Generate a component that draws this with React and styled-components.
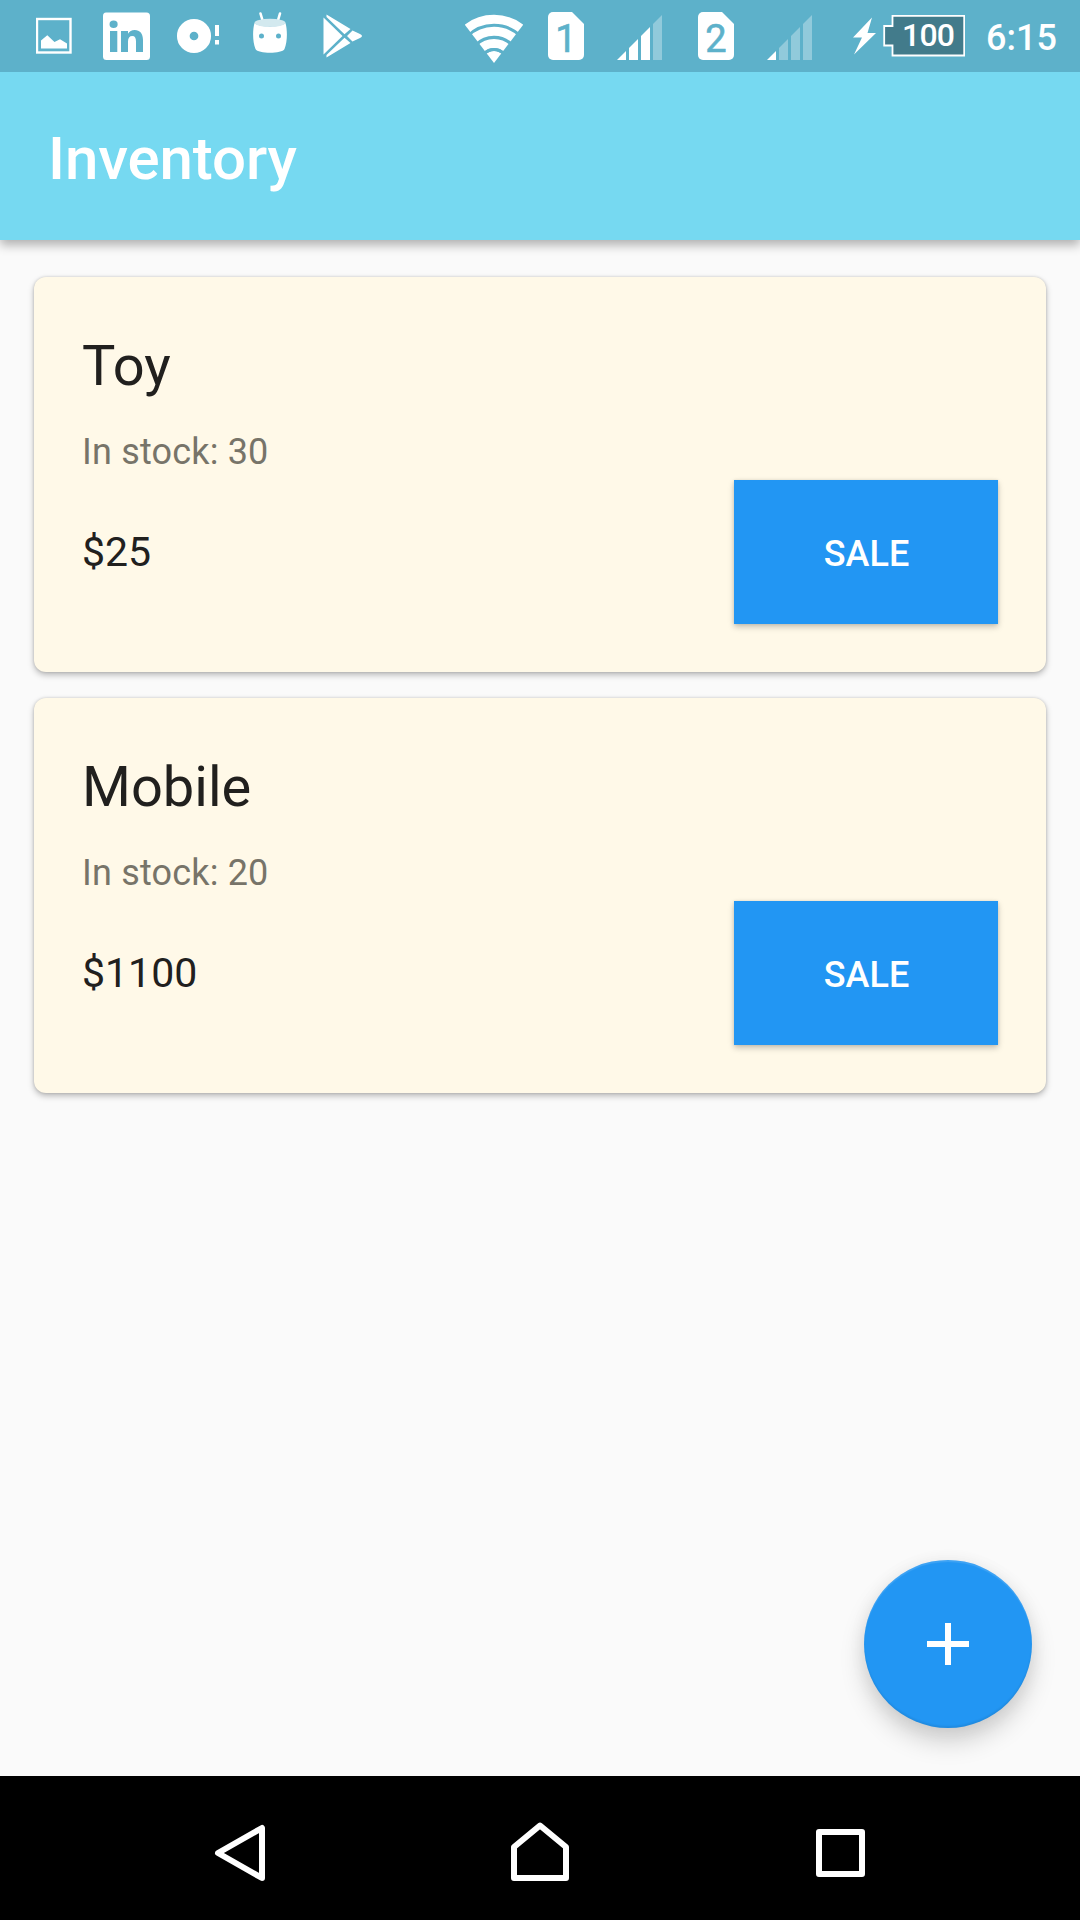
import React from "react";
import styled, { createGlobalStyle } from "styled-components";

const GlobalStyle = createGlobalStyle`
  * { box-sizing: border-box; }
  body { margin: 0; background: #fafafa; font-family: Roboto, "Liberation Sans", sans-serif; }
`;

const Screen = styled.div`
  width: 1080px;
  height: 1920px;
  display: flex;
  flex-direction: column;
  overflow: hidden;
  background: #fafafa;
`;

const StatusBar = styled.header`
  height: 72px;
  flex: none;
  display: flex;
  align-items: center;
  background: #5db1ca;
  color: #fff;
  z-index: 2;
`;

const StatusIcon = styled.svg`
  display: block;
  flex: none;
  width: ${(p) => p.$w}px;
  height: 72px;
  margin-left: ${(p) => p.$gap || 0}px;
  fill: #fff;
`;

const SimBadge = styled.span`
  flex: none;
  width: 36px;
  height: 48px;
  margin-left: ${(p) => p.$gap}px;
  border-radius: 5px;
  clip-path: polygon(0 0, 24px 0, 100% 12px, 100% 100%, 0 100%);
  background: #fff;
  color: #5db1ca;
  font-size: 38px;
  font-weight: 400;
  -webkit-text-stroke: 0.6px #5db1ca;
  line-height: 54px;
  text-align: center;
`;

const Battery = styled.span`
  display: grid;
  flex: none;
  margin-left: 6px;
  > * { grid-area: 1 / 1; }
`;

const BatteryLevel = styled.span`
  padding-left: 19px;
  font-size: 32px;
  font-weight: 500;
  letter-spacing: -0.8px;
  line-height: 71px;
`;

const Clock = styled.span`
  margin-left: 21px;
  font-size: 36px;
  font-weight: 500;
  line-height: 72px;
  padding-top: 4px;
`;

const AppBar = styled.div`
  height: 168px;
  flex: none;
  display: flex;
  align-items: center;
  padding: 4px 48px 0;
  background: #76d9f1;
  box-shadow: 0 5px 10px rgba(0, 0, 0, 0.3);
  z-index: 1;
`;

const AppTitle = styled.h1`
  margin: 0;
  color: #fff;
  font-size: 60px;
  font-weight: 500;
  letter-spacing: -0.1px;
`;

const Content = styled.main`
  flex: 1;
  display: flex;
  flex-direction: column;
  gap: 26px;
  padding: 37px 34px 48px;
`;

const Card = styled.article`
  height: 395px;
  display: flex;
  flex-direction: column;
  padding: 48px;
  border-radius: 12px;
  background: #fff9e8;
  box-shadow: 0 3px 6px rgba(0, 0, 0, 0.26), 0 0 3px rgba(0, 0, 0, 0.16);
`;

const ProductName = styled.h2`
  margin: 0;
  height: 81px;
  color: #21201e;
  font-size: 56px;
  font-weight: 400;
  line-height: 83px;
`;

const Stock = styled.p`
  margin: 0 0 auto;
  padding-top: 25px;
  color: #777469;
  font-size: 36px;
  letter-spacing: 0.18px;
  line-height: 42px;
`;

const SaleRow = styled.div`
  display: flex;
  justify-content: space-between;
  align-items: center;
`;

const Price = styled.span`
  padding-bottom: 1px;
  color: #21201e;
  font-size: 41px;
`;

const SaleButton = styled.button`
  width: 264px;
  height: 144px;
  padding: 4px 0 0 1px;
  border: 0;
  background: #2296f3;
  color: #fff;
  font: 500 36px Roboto, sans-serif;
  box-shadow: 0 3px 6px rgba(0, 0, 0, 0.22), 0 0 3px rgba(0, 0, 0, 0.1);
`;

const AddButton = styled.button`
  width: 168px;
  height: 168px;
  display: grid;
  place-items: center;
  margin: auto 14px 0 auto;
  padding: 0;
  border: 0;
  border-radius: 50%;
  background: #2296f3;
  box-shadow: 0 14px 24px rgba(0, 0, 0, 0.17), 0 2px 18px rgba(0, 0, 0, 0.06),
    inset 0 2px 1px rgba(255, 255, 255, 0.13), inset 0 -2px 2px rgba(0, 0, 0, 0.08);
`;

const NavBar = styled.nav`
  height: 144px;
  flex: none;
  display: flex;
  justify-content: space-between;
  align-items: center;
  padding: 4px 200px 0;
  background: #000;
  z-index: 1;
`;

const NavIcon = styled.svg`
  display: block;
  width: 80px;
  height: 80px;
  fill: none;
  stroke: #fff;
  stroke-width: 6;
  stroke-linejoin: round;
`;

const products = [
  { name: "Toy", stock: 30, price: 25 },
  { name: "Mobile", stock: 20, price: 1100 },
];

function Signal({ level, gap }) {
  const bars = [
    "M0 60 9 51V60Z",
    "M12 48 21 39V60H12Z",
    "M24 36 33 27V60H24Z",
    "M36 24 45 15V60H36Z",
  ];
  return (
    <StatusIcon $w={45} $gap={gap} viewBox="0 0 45 72">
      {bars.map((d, i) => (
        <path key={d} d={d} opacity={i < level ? 1 : 0.32} />
      ))}
    </StatusIcon>
  );
}

function Status() {
  return (
    <StatusBar>
      <StatusIcon $w={36} $gap={36} viewBox="36 0 36 72">
        <rect x="37" y="19" width="33.500" height="33.500" fill="none" stroke="#fff" strokeWidth="2.400" />
        <path d="M41 40.500 47.300 35.300 54.500 42 60 39.300 67 43.500V48.600H41Z" />
      </StatusIcon>
      <StatusIcon $w={48} $gap={30} viewBox="102 0 48 72">
        <path
          fillRule="evenodd"
          d="M106 12.500H146.500Q150 12.500 150 16V56.500Q150 60 146.500 60H106.500Q103 60 103 56.500V16Q103 12.500 106 12.500ZM110 31V52H117.300V31ZM113.600 20.500A4 3.700 0 1 0 113.600 28A4 3.700 0 1 0 113.600 20.500ZM121 31V52H128V41.500C128 38 129.500 36 132.300 36C135 36 136 38 136 41.500V52H143V40C143 33.500 139.800 30 134.800 30C131.500 30 129.300 31.500 128 33.700V31Z"
        />
      </StatusIcon>
      <StatusIcon $w={44} $gap={26} viewBox="176 0 44 72">
        <circle cx="194" cy="36" r="10.700" fill="none" stroke="#fff" strokeWidth="12.700" />
        <path d="M215 25H219V36H215ZM215 40H219V44.500H215Z" />
      </StatusIcon>
      <StatusIcon $w={36} $gap={32} viewBox="252 0 36 72">
        <path d="M260.500 13.500 263 22M280 13.500 277.500 22" stroke="#fff" strokeWidth="2.600" strokeLinecap="round" />
        <path
          fillRule="evenodd"
          d="M254.500 23C259 27.500 281 27.500 285.500 23C287.500 30 287.500 42 284.500 49C282 54 258 54 255.500 49C252.500 42 252.500 30 254.500 23ZM261.500 33.500A2.500 2.500 0 1 0 261.500 38.500A2.500 2.500 0 1 0 261.500 33.500ZM278.500 33.500A2.500 2.500 0 1 0 278.500 38.500A2.500 2.500 0 1 0 278.500 33.500Z"
        />
        <ellipse cx="270" cy="22.800" rx="15.500" ry="4" fill="#d3e9ef" />
      </StatusIcon>
      <StatusIcon $w={40} $gap={35} viewBox="323 0 40 72">
        <path d="M323.500 17.500 342.500 36 323.500 54.500ZM326.500 14.500 350.500 29 344.500 34.300 326.500 17ZM352.500 30.500 360 34Q364 36 360 38L352.500 41.500 347 36ZM344.500 37.700 350.500 43 326.500 57.500V55Z" />
      </StatusIcon>
      <StatusIcon $w={58} $gap={102} viewBox="465 0 58 72">
        <defs>
          <clipPath id="wifi">
            <path d="M494 63 462 21V8H526V21Z" />
          </clipPath>
        </defs>
        <g clipPath="url(#wifi)">
          <circle cx="494" cy="63" r="12" />
          <g fill="none" stroke="#fff">
            <circle cx="494" cy="63" r="19.500" strokeWidth="9" />
            <circle cx="494" cy="63" r="31.700" strokeWidth="9" />
            <circle cx="494" cy="63" r="43.700" strokeWidth="9" />
          </g>
          <circle cx="494" cy="63" r="13.500" fill="none" stroke="#5db1ca" strokeWidth="3" />
        </g>
      </StatusIcon>
      <SimBadge $gap={25}>1</SimBadge>
      <Signal level={3} gap={33} />
      <SimBadge $gap={36}>2</SimBadge>
      <Signal level={1} gap={33} />
      <StatusIcon $w={24} $gap={41} viewBox="853 0 24 72">
        <path d="M872 17.500 853 37.500H862L854 54.500 876 33H867.500Z" />
      </StatusIcon>
      <Battery>
        <StatusIcon $w={82} viewBox="883 0 82 72">
          <path
            d="M892.500 15.800H964.200V55.500H892.500V45.500H884.200V26H892.500Z"
            fill="#427b8b"
            stroke="#fff"
            strokeWidth="1.800"
          />
        </StatusIcon>
        <BatteryLevel>100</BatteryLevel>
      </Battery>
      <Clock>6:15</Clock>
    </StatusBar>
  );
}

export default function App() {
  return (
    <Screen>
      <GlobalStyle />
      <Status />
      <AppBar>
        <AppTitle>Inventory</AppTitle>
      </AppBar>
      <Content>
        {products.map((p) => (
          <Card key={p.name}>
            <ProductName>{p.name}</ProductName>
            <Stock>In stock: {p.stock}</Stock>
            <SaleRow>
              <Price>${p.price}</Price>
              <SaleButton>SALE</SaleButton>
            </SaleRow>
          </Card>
        ))}
        <AddButton aria-label="Add">
          <svg width="42" height="42" viewBox="0 0 42 42" fill="#fff">
            <path d="M18 0H24V18H42V24H24V42H18V24H0V18H18Z" />
          </svg>
        </AddButton>
      </Content>
      <NavBar>
        <NavIcon viewBox="200 1810 80 80">
          <path d="M262 1828V1878L218 1853Z" />
        </NavIcon>
        <NavIcon viewBox="500 1810 80 80">
          <path d="M540 1825.500 566 1847V1878H514V1847Z" />
        </NavIcon>
        <NavIcon viewBox="800 1810 80 80">
          <path d="M819 1832H862V1874H819Z" />
        </NavIcon>
      </NavBar>
    </Screen>
  );
}
